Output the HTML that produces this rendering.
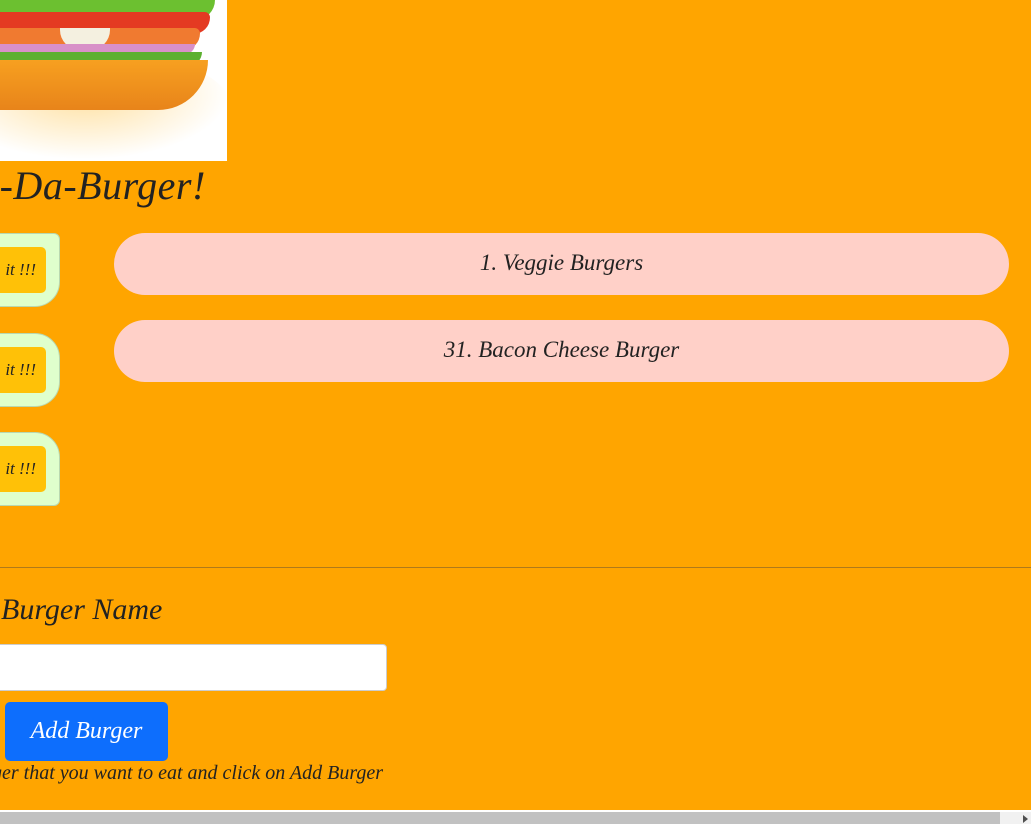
<!DOCTYPE html>
<html><head><meta charset="utf-8"><style>
html,body{margin:0;padding:0}
body{width:1031px;height:824px;overflow:hidden;background:#FFA500;position:relative;font-family:"Liberation Serif",serif;font-style:italic;color:#222}
.img{position:absolute;left:0;top:0;width:227px;height:161px;background:#fff;overflow:hidden}
.a{position:absolute;border-radius:50%}
h1{position:absolute;left:-12px;top:162px;margin:0;font-size:40px;font-weight:normal;letter-spacing:0.5px}
.box{position:absolute;left:-20px;width:78px;height:72px;background:#dfffcc;border:1px solid #b8d8b0}
.box .btn{position:absolute;right:13px;top:13px;width:60px;height:46px;background:#FFC107;border-radius:5px;font-size:17px;line-height:46px;text-align:right;padding-right:10px;box-sizing:border-box}
.pill{position:absolute;left:114px;width:895px;height:62px;background:#FFD0C8;border-radius:31px;text-align:center;line-height:60px;font-size:23px}
hr{position:absolute;left:0;top:567px;width:1031px;margin:0;border:0;border-top:1px solid #b07a1a}
.lbl{position:absolute;left:1px;top:593px;font-size:30px;font-style:italic}
.inp{position:absolute;left:-10px;top:644px;width:397px;height:47px;background:#fff;border:1px solid #ccc;border-radius:4px;box-sizing:border-box}
.add{position:absolute;left:5px;top:702px;width:163px;height:59px;background:#0d6efd;border-radius:5px;color:#fff;font-size:24px;text-align:center;line-height:58px}
.hint{position:absolute;left:-8px;top:762px;font-size:20px;white-space:nowrap}
.sb{position:absolute;left:0;top:812px;width:1000px;height:12px;background:#c1c1c1}
.sb2{position:absolute;left:1000px;top:812px;width:31px;height:12px;background:#f1f1f1}
.wl{position:absolute;left:0;top:810px;width:1031px;height:2px;background:#fff}
</style></head><body>
<div class="img">
  <div class="a" style="left:-60px;top:50px;width:290px;height:110px;background:radial-gradient(ellipse at 50% 40%,#ffe0a0,#fff 70%)"></div>
  <div style="position:absolute;left:-10px;top:0;width:225px;height:20px;background:#6cc030;border-radius:0 0 40px 0"></div>
  <div style="position:absolute;left:-10px;top:12px;width:220px;height:22px;background:#e43a22;border-radius:0 10px 30px 0"></div>
  <div style="position:absolute;left:-10px;top:28px;width:210px;height:22px;background:#f07a30;border-radius:0 10px 30px 0"></div>
  <div style="position:absolute;left:60px;top:28px;width:50px;height:22px;background:#f4f0e0;border-radius:0 0 20px 20px"></div>
  <div style="position:absolute;left:-10px;top:44px;width:205px;height:10px;background:#d890c8;border-radius:0 0 20px 0"></div>
  <div style="position:absolute;left:-10px;top:52px;width:212px;height:14px;background:#5cb030;border-radius:0 0 30px 0"></div>
  <div style="position:absolute;left:-20px;top:60px;width:228px;height:50px;background:linear-gradient(#f7a020,#e8841a);border-radius:0 0 70px 30px"></div>
</div>
<h1>t-Da-Burger!</h1>
<div class="box" style="top:233px;border-radius:0 6px 25px 0"><div class="btn">it !!!</div></div>
<div class="box" style="top:333px;border-radius:0 25px 25px 0"><div class="btn">it !!!</div></div>
<div class="box" style="top:432px;border-radius:0 25px 6px 0"><div class="btn">it !!!</div></div>
<div class="pill" style="top:233px">1. Veggie Burgers</div>
<div class="pill" style="top:320px">31. Bacon Cheese Burger</div>
<hr>
<div class="lbl">Burger Name</div>
<div class="inp"></div>
<div class="add">Add Burger</div>
<div class="hint">ger that you want to eat and click on Add Burger</div>
<div class="wl"></div><div class="sb"></div><div class="sb2"><div style="position:absolute;left:23px;top:3px;width:0;height:0;border-left:5px solid #505050;border-top:4px solid transparent;border-bottom:4px solid transparent"></div></div>
</body></html>
